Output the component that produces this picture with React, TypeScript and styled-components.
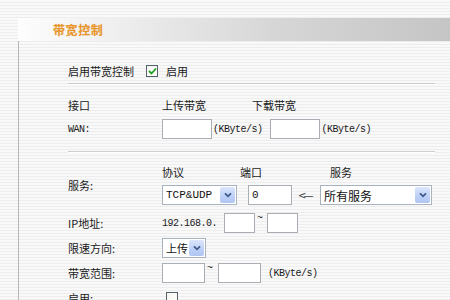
import React from "react";
import styled, { createGlobalStyle } from "styled-components";

const Global = createGlobalStyle`
  html, body { margin: 0; padding: 0; }
  body {
    width: 450px;
    height: 300px;
    overflow: hidden;
    background: repeating-linear-gradient(180deg, #f9f9f9 0px, #f9f9f9 2px, #ededed 2px, #ededed 3px);
    font-family: "Noto Sans CJK SC", "Noto Sans", sans-serif;
    font-size: 11px;
    color: #1a1a1a;
  }
`;

const Page = styled.div`
  padding-top: 18px;
  height: 300px;
  box-sizing: border-box;
  overflow: hidden;
`;

const TitleBar = styled.div`
  margin-left: 18px;
  height: 23px;
  display: flex;
  align-items: center;
  padding-left: 35px;
  background: linear-gradient(90deg, #fdfdfd 0%, #efefef 22%, #d6d6d6 60%, #c5c5c5 100%);
`;

const Title = styled.span`
  color: #e8962e;
  font-weight: 700;
  font-size: 12px;
  letter-spacing: 0.6px;
  text-shadow: 0 0 1px rgba(232, 150, 46, 0.35);
`;

const Body = styled.div`
  margin-left: 18px;
  border-left: 1px solid #b5b5b5;
  padding: 20px 0 0 49px;
  height: 259px;
  box-sizing: border-box;
  overflow: hidden;
`;

const Row = styled.div<{ $h?: number; $mt?: number }>`
  display: flex;
  align-items: center;
  height: ${(p) => p.$h ?? 20}px;
  margin-top: ${(p) => p.$mt ?? 0}px;
`;

const Label = styled.span<{ $w?: number }>`
  width: ${(p) => p.$w ?? 94}px;
  flex: none;
  white-space: nowrap;
`;

const MonoLabel = styled(Label)`
  font-family: "Liberation Mono", monospace;
  font-size: 10px;
  letter-spacing: -0.5px;
`;

const Divider = styled.div<{ $mt: number }>`
  width: 367px;
  margin-top: ${(p) => p.$mt}px;
  border-top: 1px solid #cdcdcd;
  border-bottom: 1px solid #ffffff;
`;

const ColHead = styled.span<{ $w?: number; $ml?: number }>`
  width: ${(p) => (p.$w ? `${p.$w}px` : "auto")};
  margin-left: ${(p) => p.$ml ?? 0}px;
  flex: none;
`;

const TextBox = styled.input<{ $w: number; $ml?: number }>`
  width: ${(p) => p.$w}px;
  height: 20px;
  margin: 0 0 0 ${(p) => p.$ml ?? 0}px;
  box-sizing: border-box;
  border: 1px solid #a9aeb4;
  background: #ffffff;
  padding: 0 3px;
  font-family: "Liberation Mono", monospace;
  font-size: 11px;
  color: #111;
  outline: none;
  flex: none;
`;

const Unit = styled.span<{ $ml?: number; $w?: number }>`
  margin-left: ${(p) => p.$ml ?? 1}px;
  width: ${(p) => (p.$w ? `${p.$w}px` : "auto")};
  font-family: "Liberation Mono", monospace;
  font-size: 10px;
  letter-spacing: -0.5px;
  white-space: nowrap;
  flex: none;
`;

const Tilde = styled.span<{ $w: number }>`
  width: ${(p) => p.$w}px;
  flex: none;
  align-self: flex-start;
  padding-left: 2px;
  box-sizing: border-box;
  font-family: "Liberation Mono", monospace;
  font-size: 10px;
  line-height: 12px;
`;

const Select = styled.div<{ $w: number; $ml?: number }>`
  width: ${(p) => p.$w}px;
  height: 20px;
  margin-left: ${(p) => p.$ml ?? 0}px;
  box-sizing: border-box;
  border: 1px solid #a9b3bf;
  background: #ffffff;
  display: flex;
  align-items: center;
  flex: none;
`;

const SelectText = styled.span<{ $mono?: boolean; $size?: number }>`
  flex: 1;
  padding-left: 3px;
  white-space: nowrap;
  overflow: hidden;
  font-family: ${(p) => (p.$mono ? `"Liberation Mono", monospace` : `"Noto Sans CJK SC", sans-serif`)};
  font-size: ${(p) => p.$size ?? (p.$mono ? 11 : 12)}px;
  color: #111;
`;

const DropBtn = styled.span`
  width: 15px;
  height: 16px;
  margin-right: 1px;
  border-radius: 2px;
  background: linear-gradient(180deg, #dbe6fc 0%, #bccff6 60%, #b0c6f2 100%);
  display: flex;
  align-items: center;
  justify-content: center;
  flex: none;
`;

const Arrow = styled.span`
  width: 17px;
  margin-left: 6px;
  flex: none;
  font-family: "DejaVu Sans", sans-serif;
  font-size: 10px;
  color: #444;
  letter-spacing: -3px;
  white-space: nowrap;
`;

const Check = styled.span<{ $ml?: number }>`
  width: 12px;
  height: 12px;
  margin-left: ${(p) => p.$ml ?? 0}px;
  box-sizing: border-box;
  border: 1px solid #55606a;
  background: linear-gradient(135deg, #f4f4f0 0%, #ffffff 100%);
  display: flex;
  align-items: center;
  justify-content: center;
  flex: none;
`;

const ServiceGrid = styled.div`
  display: grid;
  grid-template-columns: 94px auto;
  grid-template-rows: 16px 20px;
  row-gap: 5px;
  margin-top: 11px;
  align-items: center;
`;

const SpanLabel = styled.span`
  grid-row: 1 / span 2;
  align-self: center;
`;

const Inline = styled.div`
  display: flex;
  align-items: center;
`;

const Stack = styled.div`
  display: flex;
  flex-direction: column;
  gap: 5px;
  margin-top: 8px;
`;

const Chevron = () => (
  <svg width="8" height="6" viewBox="0 0 8 6">
    <path d="M1 1.3 L4 4.3 L7 1.3" fill="none" stroke="#3f5a8c" strokeWidth="1.8" />
  </svg>
);

const Tick = () => (
  <svg width="9" height="8" viewBox="0 0 9 8">
    <path d="M1 4 L3.5 6.5 L8 1.5" fill="none" stroke="#21a121" strokeWidth="1.8" />
  </svg>
);

export default function App() {
  return (
    <>
      <Global />
      <Page>
        <TitleBar>
          <Title>带宽控制</Title>
        </TitleBar>
        <Body>
          <Row>
            <Label $w={78}>启用带宽控制</Label>
            <Check>
              <Tick />
            </Check>
            <ColHead $ml={8}>启用</ColHead>
          </Row>
          <Divider $mt={2} />

          <Row $mt={10}>
            <Label>接口</Label>
            <ColHead $w={90}>上传带宽</ColHead>
            <ColHead>下载带宽</ColHead>
          </Row>
          <Row $mt={4}>
            <MonoLabel>WAN:</MonoLabel>
            <TextBox $w={50} />
            <Unit>(KByte/s)</Unit>
            <TextBox $w={50} $ml={7} />
            <Unit $ml={2}>(KByte/s)</Unit>
          </Row>
          <Divider $mt={12} />

          <ServiceGrid>
            <SpanLabel>服务:</SpanLabel>
            <Inline>
              <ColHead $w={78}>协议</ColHead>
              <ColHead $w={90}>端口</ColHead>
              <ColHead>服务</ColHead>
            </Inline>
            <Inline>
              <Select $w={75}>
                <SelectText $mono>TCP&amp;UDP</SelectText>
                <DropBtn>
                  <Chevron />
                </DropBtn>
              </Select>
              <TextBox $w={44} $ml={11} defaultValue="0" />
              <Arrow>&lt;—</Arrow>
              <Select $w={112} $ml={5}>
                <SelectText>所有服务</SelectText>
                <DropBtn>
                  <Chevron />
                </DropBtn>
              </Select>
            </Inline>
          </ServiceGrid>

          <Stack>
            <Row>
              <Label>IP地址:</Label>
              <Unit $ml={0} $w={62}>192.168.0.</Unit>
              <TextBox $w={31} />
              <Tilde $w={12}>~</Tilde>
              <TextBox $w={31} />
            </Row>
            <Row>
              <Label>限速方向:</Label>
              <Select $w={44}>
                <SelectText $size={11}>上传</SelectText>
                <DropBtn>
                  <Chevron />
                </DropBtn>
              </Select>
            </Row>
            <Row>
              <Label>带宽范围:</Label>
              <TextBox $w={43} />
              <Tilde $w={13}>~</Tilde>
              <TextBox $w={43} />
              <Unit $ml={7}>(KByte/s)</Unit>
            </Row>
            <Row>
              <Label>启用:</Label>
              <Check $ml={4} />
            </Row>
          </Stack>
        </Body>
      </Page>
    </>
  );
}
